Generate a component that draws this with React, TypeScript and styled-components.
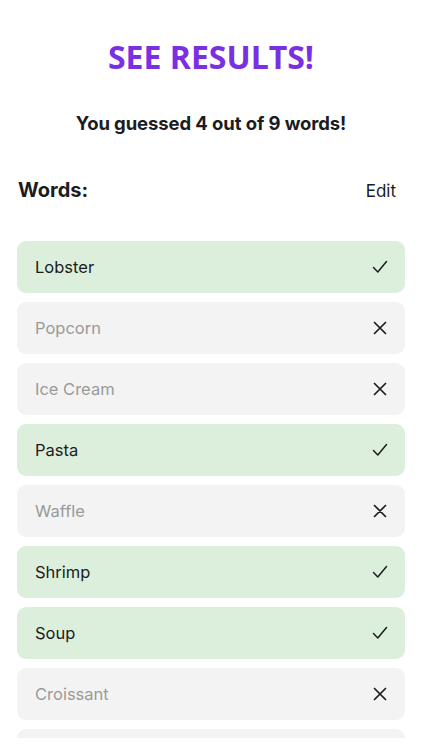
import styled, { createGlobalStyle } from 'styled-components'

const GlobalStyle = createGlobalStyle`
  body {
    margin: 0;
    background: #ffffff;
    font-family: Inter, "Noto Sans", sans-serif;
  }
`

interface Word {
  name: string
  guessed: boolean
}

const words: Word[] = [
  { name: 'Lobster', guessed: true },
  { name: 'Popcorn', guessed: false },
  { name: 'Ice Cream', guessed: false },
  { name: 'Pasta', guessed: true },
  { name: 'Waffle', guessed: false },
  { name: 'Shrimp', guessed: true },
  { name: 'Soup', guessed: true },
  { name: 'Croissant', guessed: false },
  { name: 'Pizza', guessed: false },
]

const CheckIcon = () => (
  <svg width="16" height="16" viewBox="0 0 16 16" fill="none">
    <path d="M1.5 8.5 L5.8 13 L14.5 2.5" stroke="#1c1c1e" strokeWidth="1.5" strokeLinecap="round" strokeLinejoin="round" />
  </svg>
)

const CrossIcon = () => (
  <svg width="14" height="14" viewBox="0 0 14 14" fill="none">
    <path d="M1.5 1.5 L12.5 12.5 M12.5 1.5 L1.5 12.5" stroke="#1c1c1e" strokeWidth="1.7" strokeLinecap="round" />
  </svg>
)

export default function App() {
  const guessed = words.filter(w => w.guessed).length

  return (
    <>
      <GlobalStyle />
      <Page>
        <Title>SEE RESULTS!</Title>
        <Summary>
          You guessed {guessed} out of {words.length} words!
        </Summary>
        <Header>
          <h2>Words:</h2>
          <EditButton>Edit</EditButton>
        </Header>
        <List>
          {words.map(word => (
            <Row key={word.name} $guessed={word.guessed}>
              <span>{word.name}</span>
              <IconSlot>{word.guessed ? <CheckIcon /> : <CrossIcon />}</IconSlot>
            </Row>
          ))}
        </List>
      </Page>
    </>
  )
}

// ----- STYLES -----

const Page = styled.div`
  height: 738px;
  overflow: hidden;
  padding: 0 17px;
  box-sizing: border-box;
`

const Title = styled.h1`
  margin: 0;
  padding-top: 36px;
  text-align: center;
  font-family: "Open Sans", "Noto Sans", sans-serif;
  font-weight: 700;
  font-size: 32px;
  line-height: 42px;
  color: #7b2fe3;
`

const Summary = styled.p`
  margin: 32px 0 0;
  text-align: center;
  font-size: 18.5px;
  font-weight: 700;
  letter-spacing: -0.1px;
  line-height: 26px;
  color: #1c1c1e;
`

const Header = styled.div`
  display: flex;
  justify-content: space-between;
  align-items: center;
  margin-top: 40px;
  padding-left: 1px;

  h2 {
    margin: 0;
    font-size: 20px;
    font-weight: 700;
    line-height: 28px;
    color: #1c1c1e;
  }
`

const EditButton = styled.button`
  background: none;
  border: none;
  padding: 2px 9px 0 0;
  font-family: Inter, "Noto Sans", sans-serif;
  font-size: 17px;
  color: #1c1c1e;
  cursor: pointer;
`

const List = styled.div`
  display: flex;
  flex-direction: column;
  gap: 9px;
  margin-top: 37px;
`

const Row = styled.div<{ $guessed: boolean }>`
  display: flex;
  justify-content: space-between;
  align-items: center;
  height: 52px;
  flex-shrink: 0;
  padding: 0 16px 0 18px;
  border-radius: 9px;
  background: ${({ $guessed }) => ($guessed ? '#dcefdc' : '#f3f3f3')};
  font-size: 16.5px;
  color: ${({ $guessed }) => ($guessed ? '#1c1c1e' : '#9a9a9a')};
`

const IconSlot = styled.span`
  display: flex;
  width: 18px;
  justify-content: center;
`
